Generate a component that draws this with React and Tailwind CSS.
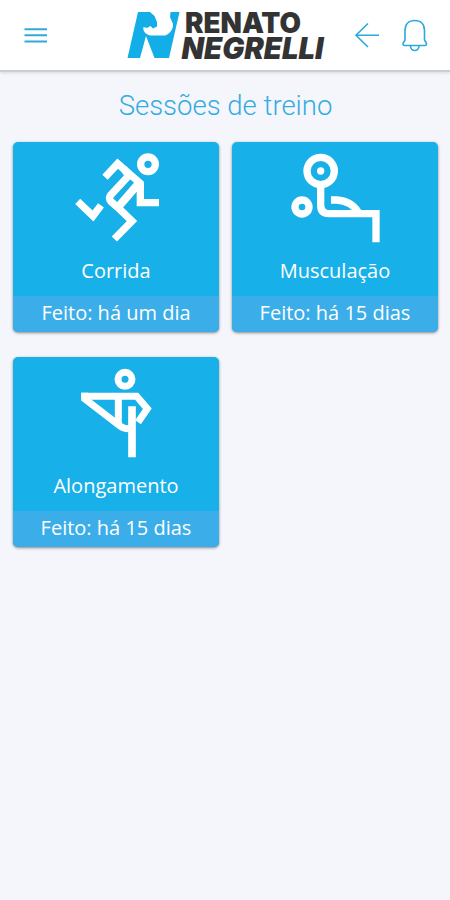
const sessions = [
  { name: 'Corrida', done: 'Feito: há um dia', icon: RunIcon },
  { name: 'Musculação', done: 'Feito: há 15 dias', icon: BenchIcon },
  { name: 'Alongamento', done: 'Feito: há 15 dias', icon: StretchIcon },
]

function RunIcon() {
  return (
    <svg width="90" height="94" viewBox="33 15 270 282" fill="none" stroke="white" strokeWidth="22">
      <circle cx="264" cy="58" r="22" />
      <path d="M135 97L173 56L241 115V173H297" />
      <path d="M190 70L206 92L153 149Q144 160 153 170L173 187L216 228L163 282" />
      <path d="M238 113L171 190" strokeWidth="24" />
      <path d="M53 169L99 213L123 181" />
    </svg>
  )
}

function BenchIcon() {
  return (
    <svg width="90" height="94" viewBox="30 15 270 282" fill="none" stroke="white" strokeWidth="22">
      <circle cx="122" cy="78" r="41" />
      <circle cx="122" cy="78" r="11" fill="white" stroke="none" />
      <circle cx="66" cy="186" r="21" />
      <path d="M122 120V181Q122 206 147 206H288V292" />
      <path d="M153 165H170Q214 168 234 201" />
    </svg>
  )
}

function StretchIcon() {
  return (
    <svg width="90" height="94" viewBox="33 30 270 282" fill="none" stroke="white" strokeWidth="21">
      <circle cx="195" cy="73" r="21" />
      <path d="M64 124H230L262 161L234 202" />
      <path d="M70 128L180 213Q190 221 206 221H216" />
      <path d="M64 113V137L84 137V113Z" fill="white" stroke="none" />
      <path d="M175 124V207" />
      <path d="M216 154V307" strokeWidth="23" />
    </svg>
  )
}

function Logo() {
  return (
    <div className="flex h-[52px] w-[200px]">
      <svg width="54" height="52" viewBox="126 10 54 52" className="shrink-0">
        <path
          d="M138 12H150L154.5 16L157 22V26.5L153 28.5L150.5 26L147 28L143.5 27C142.5 31 146 34.5 150 35.5L165 35.5C170 34 173.5 29 173 24L170 17L170.5 12H179.5L169 58H154.5L146 36L140 58H127.5Z"
          fill="#13aee8"
        />
      </svg>
      <div className="flex w-[146px] flex-col font-['Inter',sans-serif] text-[#333333]">
        <svg width="146" height="25" viewBox="180 10 146 25" fill="currentColor" overflow="visible">
          <text x="185" y="33" fontSize="28.5" fontWeight="900" textLength="116" lengthAdjust="spacingAndGlyphs">RENATO</text>
        </svg>
        <svg width="146" height="27" viewBox="180 35 146 27" fill="currentColor" overflow="visible">
          <text x="181.5" y="58.5" fontSize="29.5" fontStyle="italic" fontWeight="900" textLength="142" lengthAdjust="spacingAndGlyphs">NEGRELLI</text>
        </svg>
      </div>
    </div>
  )
}

function Header() {
  return (
    <header className="relative h-[72px] bg-white border-b-2 border-[#cdcdcf] shadow-[0_1px_3px_rgba(0,0,0,0.12)]">
      <div className="flex h-full items-center pl-6 pr-[22px]">
        <button aria-label="Menu" className="w-6">
          <svg width="24" height="18" viewBox="0 0 24 18" stroke="#31aadb" strokeWidth="2">
            <path d="M0.5 3.2H23M0.5 9.2H23M0.5 15.5H23" />
          </svg>
        </button>
        <div className="ml-[78px] pt-px">
          <Logo />
        </div>
        <button aria-label="Voltar" className="ml-7">
          <svg width="26" height="26" viewBox="0 0 26 26" fill="none" stroke="#2ba9dd" strokeWidth="1.6">
            <path d="M14 1.5L2 13.2L14 25M2 13.2H25" />
          </svg>
        </button>
        <button aria-label="Notificações" className="ml-[21px]">
          <svg width="27" height="34" viewBox="0 0 27 34" fill="none" stroke="#2ba9dd" strokeWidth="1.6">
            <path d="M4 22V12.5C4 6 8 2.5 13.8 2.5S23.5 6 23.5 12.5V22C23.5 23 25.5 23.5 25.5 26Q25.5 27.5 24 27.5H3.5Q2 27.5 2 26C2 23.5 4 23 4 22Z" />
            <path d="M9.5 28C9.5 34 18 34 18 28" />
          </svg>
        </button>
      </div>
    </header>
  )
}

function SessionCard({ name, done, icon: Icon }) {
  return (
    <button className="flex h-[190px] flex-col overflow-hidden rounded-[5px] bg-[#18b0e8] text-white shadow-[0_1px_3px_rgba(0,0,0,0.45)]">
      <div className="flex w-full flex-1 flex-col items-center pt-2">
        <Icon />
        <span className="mt-[13px] text-[20px] leading-7">{name}</span>
      </div>
      <div className="flex h-9 w-full items-center justify-center bg-[#3baeea] pb-0.5 text-[20px]">{done}</div>
    </button>
  )
}

export default function App() {
  return (
    <div className="min-h-screen bg-[#f4f6fb] font-['Open_Sans',sans-serif]">
      <Header />
      <main className="px-[13px] pr-3">
        <h1 className="pt-[14px] text-center font-['Roboto',sans-serif] text-[27.5px] font-light leading-10 text-[#35acdf]">
          Sessões de treino
        </h1>
        <div className="mt-4 grid grid-cols-[206px_206px] gap-x-[13px] gap-y-[25px]">
          {sessions.map((session) => (
            <SessionCard key={session.name} {...session} />
          ))}
        </div>
      </main>
    </div>
  )
}
